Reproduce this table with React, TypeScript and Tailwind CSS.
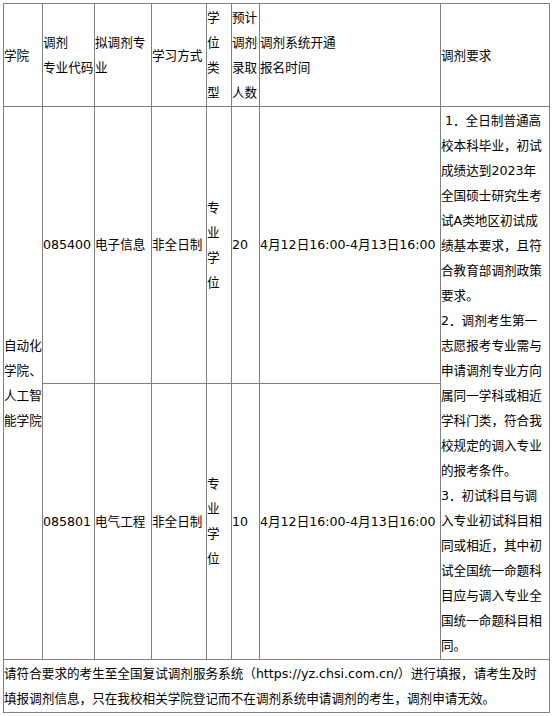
import React from "react";

const cell = "border border-[#808080] px-0 py-px align-middle text-left font-normal";

const requirements = [
  "\u00a01．全日制普通高",
  "校本科毕业，初试",
  "成绩达到2023年",
  "全国硕士研究生考",
  "试A类地区初试成",
  "绩基本要求，且符",
  "合教育部调剂政策",
  "要求。",
  "2．调剂考生第一",
  "志愿报考专业需与",
  "申请调剂专业方向",
  "属同一学科或相近",
  "学科门类，符合我",
  "校规定的调入专业",
  "的报考条件。",
  "3．初试科目与调",
  "入专业初试科目相",
  "同或相近，其中初",
  "试全国统一命题科",
  "目应与调入专业全",
  "国统一命题科目相",
  "同。",
];

const majors = [
  { code: "085400", name: "电子信息", count: "20" },
  { code: "085801", name: "电气工程", count: "10" },
];

function Lines({ items }: { items: string[] }) {
  return (
    <>
      {items.map((t, i) => (
        <span key={i} className="block whitespace-nowrap">
          {t}
        </span>
      ))}
    </>
  );
}

export default function App() {
  return (
    <div className="bg-white min-h-[716px] pt-[3px] pl-[3px]">
      <table className="border-collapse table-fixed w-[546px] text-black text-[12.6px] leading-[25px] font-['DejaVu_Sans','Noto_Sans_CJK_SC',sans-serif]">
        <colgroup>
          <col className="w-[39px]" />
          <col className="w-[52px]" />
          <col className="w-[57px]" />
          <col className="w-[55px]" />
          <col className="w-[25px]" />
          <col className="w-[28px]" />
          <col className="w-[181px]" />
          <col className="w-[109px]" />
        </colgroup>
        <thead>
          <tr>
            <th className={cell}>学院</th>
            <th className={cell}>
              <Lines items={["调剂", "专业代码"]} />
            </th>
            <th className={cell}>
              <Lines items={["拟调剂专", "业"]} />
            </th>
            <th className={cell}>学习方式</th>
            <th className={cell}>
              <Lines items={["学", "位", "类", "型"]} />
            </th>
            <th className={cell}>
              <Lines items={["预计", "调剂", "录取", "人数"]} />
            </th>
            <th className={cell}>
              <Lines items={["调剂系统开通", "报名时间"]} />
            </th>
            <th className={cell}>调剂要求</th>
          </tr>
        </thead>
        <tbody>
          {majors.map((m, i) => (
            <tr key={m.code}>
              {i === 0 && (
                <td className={cell} rowSpan={2}>
                  <Lines items={["自动化", "学院、", "人工智", "能学院"]} />
                </td>
              )}
              <td className={cell}>{m.code}</td>
              <td className={cell}>{m.name}</td>
              <td className={cell}>非全日制</td>
              <td className={cell}>
                <Lines items={["专", "业", "学", "位"]} />
              </td>
              <td className={cell}>{m.count}</td>
              <td className={`${cell} whitespace-nowrap`}>4月12日16:00-4月13日16:00</td>
              {i === 0 && (
                <td className={cell} rowSpan={2}>
                  <Lines items={requirements} />
                </td>
              )}
            </tr>
          ))}
          <tr>
            <td className={cell} colSpan={8}>
              <Lines
                items={[
                  "请符合要求的考生至全国复试调剂服务系统（https://yz.chsi.com.cn/）进行填报，请考生及时",
                  "填报调剂信息，只在我校相关学院登记而不在调剂系统申请调剂的考生，调剂申请无效。",
                ]}
              />
            </td>
          </tr>
        </tbody>
      </table>
    </div>
  );
}
